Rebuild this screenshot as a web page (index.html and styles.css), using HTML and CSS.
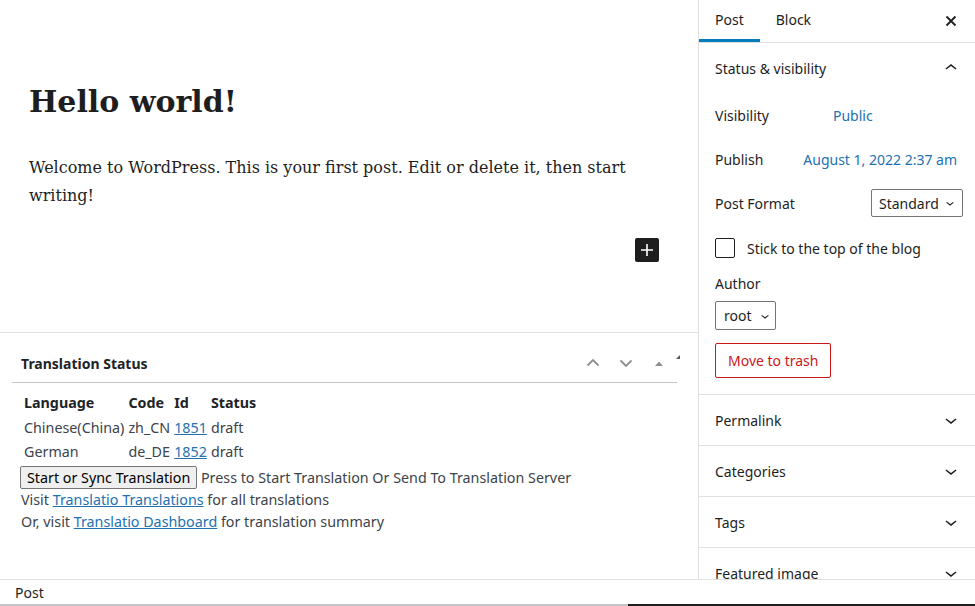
FILE: index.html
```html
<!DOCTYPE html>
<html lang="en">
<head>
<meta charset="utf-8">
<title>Edit Post</title>
<link rel="stylesheet" href="styles.css">
</head>
<body>
<div class="layout">
  <main class="editor">
    <section class="canvas">
      <h1 class="post-title">Hello world!</h1>
      <p class="post-body">Welcome to WordPress. This is your first post. Edit or delete it, then start writing!</p>
      <div class="inserter-row">
        <button class="inserter" aria-label="Add block">
          <svg viewBox="0 0 24 24" width="24" height="24"><path d="M18 11.2h-5.2V6h-1.6v5.2H6v1.6h5.2V18h1.6v-5.2H18z"/></svg>
        </button>
      </div>
    </section>
    <section class="metaboxes">
      <div class="postbox">
        <div class="postbox-header">
          <h2 class="postbox-title">Translation Status</h2>
          <div class="postbox-controls">
            <span class="ctrl">
              <svg viewBox="0 0 16 16" width="16" height="16"><path d="M2.5 10.5L8 5l5.5 5.5" fill="none" stroke-width="1.8"/></svg>
            </span>
            <span class="ctrl">
              <svg viewBox="0 0 16 16" width="16" height="16"><path d="M2.5 5.5L8 11l5.5-5.5" fill="none" stroke-width="1.8"/></svg>
            </span>
            <span class="ctrl">
              <svg viewBox="0 0 16 16" width="16" height="16"><path class="tri" d="M4 11L8 6.5 12 11z"/></svg>
            </span>
          </div>
          <span class="corner"></span>
        </div>
        <div class="postbox-inside">
          <table class="tr-table">
            <thead>
              <tr><th>Language</th><th>Code</th><th>Id</th><th>Status</th></tr>
            </thead>
            <tbody>
              <tr><td>Chinese(China)</td><td>zh_CN</td><td><a href="#">1851</a></td><td>draft</td></tr>
              <tr><td>German</td><td>de_DE</td><td><a href="#">1852</a></td><td>draft</td></tr>
            </tbody>
          </table>
          <div class="tr-line"><button class="sync-btn">Start or Sync Translation</button> Press to Start Translation Or Send To Translation Server</div>
          <div class="tr-line">Visit <a href="#">Translatio Translations</a> for all translations</div>
          <div class="tr-line">Or, visit <a href="#">Translatio Dashboard</a> for translation summary</div>
        </div>
      </div>
    </section>
  </main>
  <aside class="sidebar">
    <div class="tabs">
      <button class="tab active">Post</button>
      <button class="tab">Block</button>
      <button class="close" aria-label="Close settings">
        <svg viewBox="0 0 12 12" width="12" height="12"><path d="M1.5 1.5l9 9M10.5 1.5l-9 9" fill="none" stroke-width="1.8"/></svg>
      </button>
    </div>
    <div class="panel open">
      <div class="panel-head">
        <span>Status &amp; visibility</span>
        <svg viewBox="0 0 24 24" width="24" height="24"><path d="M6.5 12.4L12 8l5.5 4.4-.9 1.2L12 10l-4.6 3.6-1-1.2z"/></svg>
      </div>
      <div class="panel-body">
        <div class="row grid-row"><span>Visibility</span><a href="#" class="val">Public</a></div>
        <div class="row split-row"><span>Publish</span><a href="#" class="val pub">August 1, 2022 2:37 am</a></div>
        <div class="row split-row"><span>Post Format</span>
          <span class="select fmt">Standard<svg viewBox="0 0 24 24" width="16" height="16"><path d="M17.5 11.6L12 16l-5.5-4.4.9-1.2L12 14l4.6-3.6 1 1.2z"/></svg></span>
        </div>
        <label class="check-row"><span class="checkbox"></span>Stick to the top of the blog</label>
        <div class="author-label">Author</div>
        <span class="select author">root<svg viewBox="0 0 24 24" width="16" height="16"><path d="M17.5 11.6L12 16l-5.5-4.4.9-1.2L12 14l4.6-3.6 1 1.2z"/></svg></span>
        <div><button class="trash">Move to trash</button></div>
      </div>
    </div>
    <div class="panel">
      <div class="panel-head"><span>Permalink</span><svg viewBox="0 0 24 24" width="24" height="24"><path d="M17.5 11.6L12 16l-5.5-4.4.9-1.2L12 14l4.6-3.6 1 1.2z"/></svg></div>
    </div>
    <div class="panel">
      <div class="panel-head"><span>Categories</span><svg viewBox="0 0 24 24" width="24" height="24"><path d="M17.5 11.6L12 16l-5.5-4.4.9-1.2L12 14l4.6-3.6 1 1.2z"/></svg></div>
    </div>
    <div class="panel">
      <div class="panel-head"><span>Tags</span><svg viewBox="0 0 24 24" width="24" height="24"><path d="M17.5 11.6L12 16l-5.5-4.4.9-1.2L12 14l4.6-3.6 1 1.2z"/></svg></div>
    </div>
    <div class="panel">
      <div class="panel-head"><span>Featured image</span><svg viewBox="0 0 24 24" width="24" height="24"><path d="M17.5 11.6L12 16l-5.5-4.4.9-1.2L12 14l4.6-3.6 1 1.2z"/></svg></div>
    </div>
  </aside>
</div>
<footer class="footer">
  <span class="crumb">Post</span>
</footer>
<div class="bottom-line"><span class="dark"></span></div>
</body>
</html>
```

FILE: styles.css
```css
* { box-sizing: border-box; }
html, body { margin: 0; padding: 0; }
body {
  width: 975px;
  height: 606px;
  overflow: hidden;
  font-family: "Noto Sans", "Open Sans", sans-serif;
  font-size: 14px;
  color: #1e1e1e;
  background: #fff;
}
button { font-family: inherit; }
a { color: #2271b1; }

.layout {
  display: flex;
  height: 579px;
  overflow: hidden;
}

/* ---------- editor ---------- */
.editor {
  width: 699px;
  border-right: 1px solid #e0e0e0;
  display: flex;
  flex-direction: column;
}
.canvas {
  height: 332px;
  padding: 0 39px 0 29px;
}
.post-title {
  margin: 0;
  padding-top: 79px;
  font-family: "DejaVu Serif", serif;
  font-weight: bold;
  font-size: 30px;
  line-height: 46px;
  color: #1e1e1e;
}
.post-body {
  margin: 29px 0 0;
  width: 600px;
  font-family: "DejaVu Serif", serif;
  font-size: 16px;
  line-height: 28px;
  color: #1e1e1e;
}
.inserter-row {
  display: flex;
  justify-content: flex-end;
  margin-top: 28px;
}
.inserter {
  width: 24px;
  height: 24px;
  padding: 0;
  border: 0;
  border-radius: 2px;
  background: #1e1e1e;
  display: flex;
  align-items: center;
  justify-content: center;
}
.inserter svg { fill: #fff; }

.metaboxes {
  flex: 1;
  border-top: 1px solid #e0e0e0;
}
.postbox {
  margin: 0 21px 0 12px;
}
.postbox-header {
  position: relative;
  height: 50px;
  padding-top: 11px;
  display: flex;
  align-items: center;
  justify-content: space-between;
  border-bottom: 1px solid #c3c4c7;
}
.postbox-title {
  margin: 0 0 0 9px;
  font-size: 14px;
  font-weight: bold;
  color: #1d2327;
}
.postbox-controls {
  display: flex;
  align-items: center;
  gap: 17px;
  margin-right: 10px;
}
.ctrl { display: flex; }
.ctrl svg path { stroke: #8c8f94; }
.ctrl svg path.tri { stroke: none; fill: #8c8f94; }
.corner {
  position: absolute;
  right: -3px;
  top: 22px;
  width: 0;
  height: 0;
  border-left: 4px solid transparent;
  border-bottom: 4px solid #50575e;
}
.postbox-inside {
  padding: 7px 0 0 9px;
  color: #3c434a;
  font-size: 14.3px;
}
.tr-table {
  border-spacing: 2px;
  margin-top: 0;
}
.tr-table th, .tr-table td {
  padding: 1px;
  text-align: left;
  line-height: 20.5px;
  white-space: nowrap;
}
.tr-table th { font-weight: bold; color: #1d2327; }
.tr-line {
  line-height: 22px;
}
.sync-btn {
  font-size: 14.3px;
  color: #000;
  background: #efefef;
  border: 1px solid #767676;
  border-radius: 2px;
  padding: 0 6px;
  height: 23px;
  margin-left: -1px;
}

/* ---------- sidebar ---------- */
.sidebar {
  flex: 1;
  overflow: hidden;
}
.tabs {
  display: flex;
  align-items: stretch;
  height: 43px;
  border-bottom: 1px solid #e0e0e0;
}
.tab {
  border: 0;
  background: none;
  padding: 0 16px;
  font-size: 14px;
  color: #1e1e1e;
  height: 42px;
  border-bottom: 3px solid transparent;
}
.tab.active { border-bottom-color: #007cba; }
.close {
  margin-left: auto;
  margin-right: 18px;
  border: 0;
  background: none;
  padding: 0;
  display: flex;
  align-items: center;
}
.close svg path { stroke: #1e1e1e; }

.panel { border-bottom: 1px solid #e0e0e0; }
.panel-head {
  height: 50px;
  padding: 0 12px 0 16px;
  display: flex;
  align-items: center;
  justify-content: space-between;
  font-size: 14px;
  color: #1e1e1e;
}
.panel-head svg { fill: #1e1e1e; }
.panel-body {
  padding: 0 12px 16px 16px;
}
.row {
  height: 44px;
  display: flex;
  align-items: center;
}
.grid-row span { width: 118px; }
.split-row { justify-content: space-between; }
.val { text-decoration: none; color: #2271b1; }
.pub { margin-right: 6px; }
.select {
  display: inline-flex;
  align-items: center;
  border: 1px solid #757575;
  border-radius: 2px;
  color: #1e1e1e;
}
.select svg { fill: #1e1e1e; }
.fmt {
  height: 28px;
  width: 92px;
  padding-left: 7px;
  gap: 3px;
}
.check-row {
  display: flex;
  align-items: center;
  gap: 12px;
  height: 46px;
}
.checkbox {
  width: 20px;
  height: 20px;
  border: 1.5px solid #1e1e1e;
  border-radius: 2px;
}
.author-label {
  line-height: 20px;
  margin-top: 3px;
}
.author {
  margin-top: 7px;
  height: 29px;
  width: 61px;
  padding-left: 8px;
  gap: 5px;
}
.trash {
  margin-top: 13px;
  height: 35px;
  padding: 0 12px;
  border: 1px solid #cc1818;
  border-radius: 2px;
  background: #fff;
  color: #cc1818;
  font-size: 14px;
}

/* ---------- footer ---------- */
.footer {
  height: 25px;
  border-top: 1px solid #e0e0e0;
  padding: 0 15px;
  display: flex;
  align-items: center;
  font-size: 14px;
  color: #1e1e1e;
  background: #fff;
}
.bottom-line {
  display: flex;
  justify-content: flex-end;
  height: 2px;
  background: #c3c4c7;
}
.bottom-line .dark {
  width: 347px;
  background: #1e1e1e;
}
```
